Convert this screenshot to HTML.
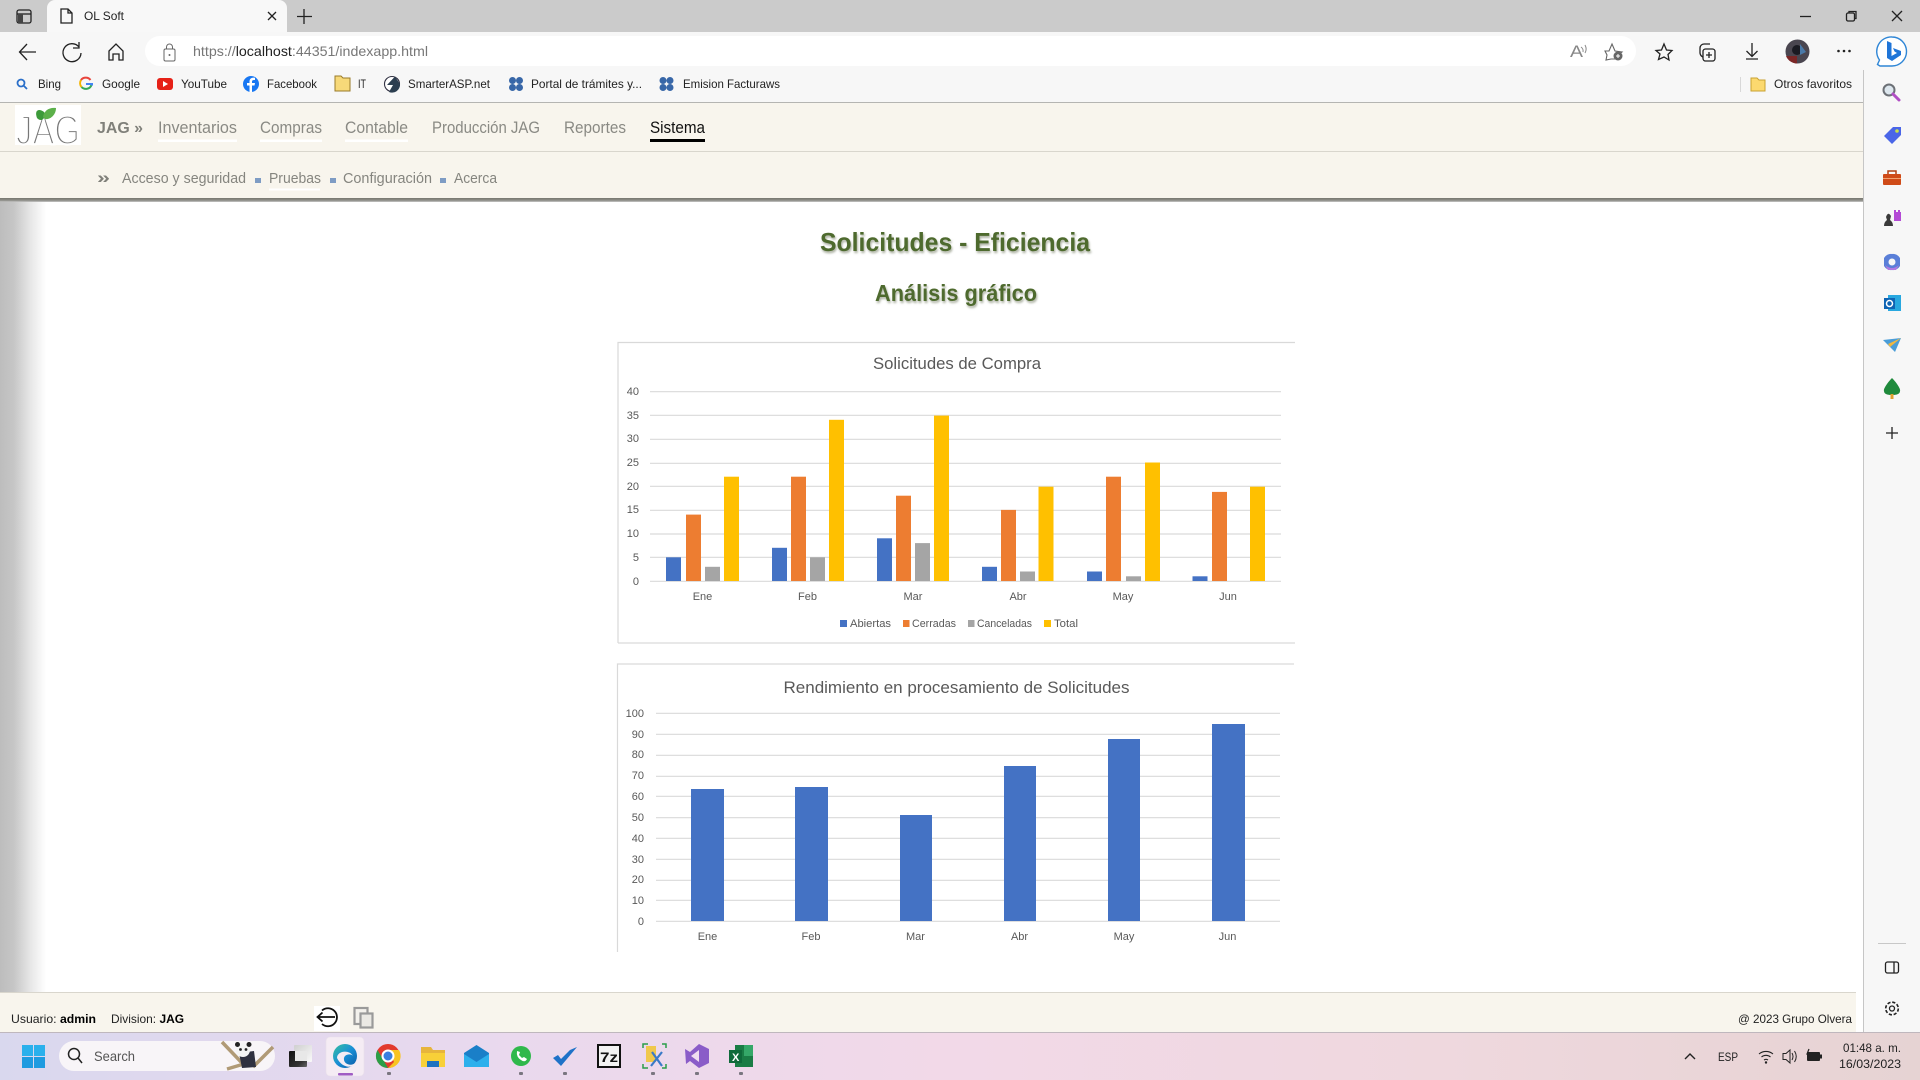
<!DOCTYPE html>
<html lang="es"><head><meta charset="utf-8"><title>OL Soft</title>
<style>
html,body{margin:0;padding:0;background:#fff;overflow:hidden}
svg{display:block}
text{font-family:"Liberation Sans",sans-serif}
.tb{font-size:12px;fill:#222}
.nav{font-size:17px;fill:#8a8a84}
.sub{font-size:15px;fill:#85857f}
.cl{font-size:11px;fill:#595959}
.ct{font-size:17px;fill:#595959}
.ic{fill:none;stroke:#222;stroke-width:1.3}
.h{font-weight:bold;fill:#4e6a2e;filter:drop-shadow(1px 2px 1px rgba(90,100,70,.5))}
</style></head><body>
<svg width="1920" height="1080" viewBox="0 0 1920 1080" xmlns="http://www.w3.org/2000/svg">
<defs>
<linearGradient id="ls" x1="0" x2="1" y1="0" y2="0"><stop offset="0" stop-color="#bdbdbd"/><stop offset=".3" stop-color="#c6c6c6"/><stop offset=".65" stop-color="#e6e6e6"/><stop offset="1" stop-color="#fff"/></linearGradient>
<linearGradient id="ns" x1="0" x2="0" y1="0" y2="1"><stop offset="0" stop-color="#77776f"/><stop offset=".6" stop-color="#8f8f89"/><stop offset="1" stop-color="#c8c8c8"/></linearGradient>
<linearGradient id="tk" x1="0" x2="1" y1="0" y2="0"><stop offset="0" stop-color="#d9d8ee"/><stop offset=".25" stop-color="#e9d9ee"/><stop offset=".5" stop-color="#f2d9e8"/><stop offset=".75" stop-color="#efd8de"/><stop offset="1" stop-color="#e6d3d3"/></linearGradient>
<linearGradient id="ed" x1="0" x2="1" y1="0" y2="1"><stop offset="0" stop-color="#35c1a0"/><stop offset=".5" stop-color="#1a8fd6"/><stop offset="1" stop-color="#0c59a4"/></linearGradient>
<linearGradient id="tv1" x1="0" x2="1" y1="0" y2="1"><stop offset="0" stop-color="#111"/><stop offset=".7" stop-color="#333"/><stop offset="1" stop-color="#666"/></linearGradient>
<linearGradient id="tv2" x1="0" x2="1" y1="0" y2="1"><stop offset="0" stop-color="#cfcfcf"/><stop offset="1" stop-color="#fafafa"/></linearGradient>
</defs>

<!-- base -->
<rect width="1920" height="1080" fill="#fff"/>
<!-- window title -->
<rect width="1920" height="32" fill="#cbcbcb"/>
<path d="M47 32V8a8 8 0 0 1 8-8H279a8 8 0 0 1 8 8V32Z" fill="#f8f8f8"/>
<rect x="17" y="10" width="14" height="13" rx="2" class="ic" stroke-width="1.6"/><path d="M17 14H31" class="ic"/><rect x="18" y="14" width="5" height="9" fill="#444"/>
<path d="M61 9H68L72 13V23H61Z M68 9V13H72" class="ic" stroke-width="1.2"/>
<text x="84" y="20" class="tb" textLength="40" lengthAdjust="spacingAndGlyphs">OL Soft</text>
<path d="M268 12L276 20M276 12L268 20" class="ic" stroke-width="1.4"/>
<path d="M304 9V24M297 16.500H312" class="ic"/>
<path d="M1800 16.500H1811" class="ic"/>
<rect x="1846.500" y="13" width="8" height="8" rx="1.500" class="ic" stroke-width="1.100"/><path d="M1849 13V11.500H1856V18.500H1854.500" class="ic" stroke-width="1.100"/>
<path d="M1892 11L1902 21M1902 11L1892 21" class="ic" stroke-width="1.200"/>

<!-- toolbar & bookmarks -->
<rect y="32" width="1920" height="70" fill="#f7f7f7"/>
<path d="M36 52H20M27 44L19.500 52L27 60" class="ic" stroke-width="1.200"/>
<path d="M79 47A9 9 0 1 0 81 53M79 42V48H73" class="ic" stroke-width="1.100"/>
<path d="M109 51L116 44L123 51V60H119V54H113V60H109Z" class="ic" stroke-width="1.100"/>
<rect x="145" y="36" width="1491" height="30" rx="15" fill="#fff"/>
<rect x="164" y="49" width="11" height="12" rx="1.500" fill="none" stroke="#666" stroke-width="1"/><path d="M166.500 49V47A3 3 0 0 1 172.500 47V49" fill="none" stroke="#666" stroke-width="1"/><circle cx="169.500" cy="55" r="1" fill="#666"/>
<text x="193" y="56" font-size="14" fill="#777" textLength="235" lengthAdjust="spacingAndGlyphs">https://<tspan fill="#222">localhost</tspan>:44351/indexapp.html</text>

<text x="1570" y="57" font-size="17" fill="#888" textLength="13" lengthAdjust="spacingAndGlyphs">A</text>
<path d="M1585 45A8 8 0 0 1 1585 53M1581 47A5 5 0 0 1 1583 52" fill="none" stroke="#888"/>
<path d="M1612 44L1615 51L1622 52L1617 56L1618 59H1611L1606 60L1607 55L1605 51L1609 51Z" fill="none" stroke="#666" stroke-width="1.100"/><circle cx="1618" cy="56" r="4.500" fill="#666"/><path d="M1616 56H1620M1618 54V58" stroke="#fff"/>
<path d="M1664 44L1666.500 50L1672 50.500L1668 54.500L1669 60L1664 57L1658.500 59.500L1660 54L1656 50.500L1661.500 50Z" class="ic" stroke-width="1.100"/>
<rect x="1703" y="49" width="12" height="12" rx="2.500" class="ic" stroke-width="1.100"/><path d="M1703 57A5 5 0 0 1 1700 53V48A4 4 0 0 1 1704 44H1710M1709 52V58M1706 55H1712" class="ic" stroke-width="1.100"/>
<path d="M1752 43V56M1746.500 51L1752 56.500L1757.500 51M1746 59H1758" class="ic" stroke-width="1.100"/>
<circle cx="1797.500" cy="51.500" r="12" fill="#4a4650"/><circle cx="1797" cy="50" r="5" fill="#1a1a22"/><path d="M1786 56A12 12 0 0 0 1797 63.500V56Z" fill="#7b2626"/><path d="M1800 44L1806 52L1800 55Z" fill="#4a79a8"/>
<circle cx="1838.500" cy="51" r="1.300" fill="#222"/><circle cx="1844" cy="51" r="1.300" fill="#222"/><circle cx="1849.500" cy="51" r="1.300" fill="#222"/>
<!-- bing button -->
<path d="M1892 37A14.500 14.500 0 0 1 1892 66H1880L1877.500 64.500L1879.500 60A14.500 14.500 0 0 1 1892 37Z" fill="#fff" stroke="#2f86d6" stroke-width="1.400"/>
<path d="M1887 41L1891.500 43V56L1897 53L1894.500 51.500L1893 48L1901 51V55L1892 61L1887 58Z" fill="#1f75d8"/>

<!-- bookmarks -->
<circle cx="21" cy="83" r="3.500" fill="none" stroke="#2a6fc9" stroke-width="1.800"/><path d="M23.500 85.500L27 89" stroke="#2a6fc9" stroke-width="1.800"/>
<text x="38" y="88" class="tb" textLength="23" lengthAdjust="spacingAndGlyphs">Bing</text>
<path d="M90.500 80A6 6 0 0 0 81 80" fill="none" stroke="#e8453c" stroke-width="2"/><path d="M81 80A6 6 0 0 0 81.500 87" fill="none" stroke="#f4b400" stroke-width="2"/><path d="M81.500 87A6 6 0 0 0 91.500 85" fill="none" stroke="#34a853" stroke-width="2"/><path d="M86 84H92V85.500" fill="none" stroke="#4285f4" stroke-width="2"/>
<text x="102" y="88" class="tb" textLength="38" lengthAdjust="spacingAndGlyphs">Google</text>
<rect x="157" y="78" width="16" height="12" rx="3" fill="#e62117"/><path d="M163 81V87L168 84Z" fill="#fff"/>
<text x="181" y="88" class="tb" textLength="46" lengthAdjust="spacingAndGlyphs">YouTube</text>
<circle cx="251" cy="84" r="8" fill="#1877f2"/><path d="M252 92V85.500H254.500L255 83H252V81.500Q252 80 254 80H255V77.800Q250 77 249.500 81V83H247V85.500H249.500V92Z" fill="#fff"/>
<text x="267" y="88" class="tb" textLength="50" lengthAdjust="spacingAndGlyphs">Facebook</text>
<path d="M335 76H341L343 78H350V91H335Z" fill="#f7d979" stroke="#9a7b2a" stroke-width="1"/>
<text x="358" y="88" class="tb" textLength="8" lengthAdjust="spacingAndGlyphs">IT</text>
<circle cx="392" cy="84" r="7.500" fill="#fff" stroke="#334" stroke-width="1.100"/><path d="M395 76.500L387 85H393L389 92A8 8 0 0 0 400 84Z" fill="#2c3e50"/>
<text x="408" y="88" class="tb" textLength="82" lengthAdjust="spacingAndGlyphs">SmarterASP.net</text>
<g fill="#3867a8"><circle cx="512.500" cy="80.500" r="3.500"/><circle cx="519.500" cy="80.500" r="3.500"/><circle cx="512.500" cy="87.500" r="3.500"/><circle cx="519.500" cy="87.500" r="3.500"/>
<circle cx="663" cy="80.500" r="3.500"/><circle cx="670" cy="80.500" r="3.500"/><circle cx="663" cy="87.500" r="3.500"/><circle cx="670" cy="87.500" r="3.500"/></g>
<text x="531" y="88" class="tb" textLength="111" lengthAdjust="spacingAndGlyphs">Portal de trámites y...</text>
<text x="683" y="88" class="tb" textLength="97" lengthAdjust="spacingAndGlyphs">Emision Facturaws</text>
<rect x="1740" y="77" width="1" height="15" fill="#d8d8d8"/>
<path d="M1751 78H1757L1759 80H1765V91H1751Z" fill="#fcd96f" stroke="#c8a232" stroke-width="1"/>
<text x="1774" y="88" class="tb" textLength="78" lengthAdjust="spacingAndGlyphs">Otros favoritos</text>

<!-- app nav -->
<rect y="102" width="1863" height="1" fill="#b5b5b2"/>
<rect y="103" width="1863" height="48" fill="#f8f5ed"/>
<rect y="151" width="1863" height="1" fill="#d9d6cd"/>
<rect y="152" width="1863" height="46" fill="#f8f5ed"/>
<rect y="198" width="1863" height="4" fill="url(#ns)"/>
<rect x="15" y="105" width="66" height="40" fill="#fff"/>
<text x="16" y="144" font-size="41" fill="#777" stroke="#fff" stroke-width="2.200" textLength="64" lengthAdjust="spacingAndGlyphs">JAG</text>
<path d="M37 118C34 110 39 108 44 112C46 115 44 120 41 120C39 120 38 119 37 118Z" fill="#3d9a3a"/><path d="M43 117C44 110 50 107 56 108C56 115 50 120 45 119Z" fill="#5cb04a"/>
<text x="97" y="133" font-size="16" font-weight="bold" fill="#80807a" textLength="46" lengthAdjust="spacingAndGlyphs">JAG »</text>
<text x="158" y="133" class="nav" textLength="79" lengthAdjust="spacingAndGlyphs">Inventarios</text>
<text x="260" y="133" class="nav" textLength="62" lengthAdjust="spacingAndGlyphs">Compras</text>
<text x="345" y="133" class="nav" textLength="63" lengthAdjust="spacingAndGlyphs">Contable</text>
<text x="432" y="133" class="nav" textLength="108" lengthAdjust="spacingAndGlyphs">Producción JAG</text>
<text x="564" y="133" class="nav" textLength="62" lengthAdjust="spacingAndGlyphs">Reportes</text>
<text x="650" y="133" class="nav" style="fill:#111" textLength="55" lengthAdjust="spacingAndGlyphs">Sistema</text>
<g fill="#fff"><rect x="158" y="139.500" width="79" height="2.500"/><rect x="260" y="139.500" width="62" height="2.500"/><rect x="345" y="139.500" width="63" height="2.500"/></g>
<rect x="650" y="139" width="55" height="3" fill="#000"/>
<text x="97" y="183" font-size="17" font-weight="bold" fill="#80807a" textLength="13" lengthAdjust="spacingAndGlyphs">»</text>
<text x="122" y="183" class="sub" textLength="124" lengthAdjust="spacingAndGlyphs">Acceso y seguridad</text>
<text x="269" y="183" class="sub" textLength="52" lengthAdjust="spacingAndGlyphs">Pruebas</text>
<text x="343" y="183" class="sub" textLength="89" lengthAdjust="spacingAndGlyphs">Configuración</text>
<text x="454" y="183" class="sub" textLength="43" lengthAdjust="spacingAndGlyphs">Acerca</text>
<g fill="#7e9cc4"><rect x="255" y="178" width="6" height="5"/><rect x="330" y="178" width="6" height="5"/><rect x="440" y="178" width="6" height="5"/></g>
<rect x="269" y="188.500" width="51" height="2" fill="#fff"/>

<!-- left shadow -->
<rect x="0" y="202" width="46" height="790" fill="url(#ls)"/>

<!-- headings -->
<text x="820" y="251" font-size="26" class="h" textLength="270" lengthAdjust="spacingAndGlyphs">Solicitudes - Eficiencia</text>
<text x="875" y="301" font-size="23" class="h" textLength="162" lengthAdjust="spacingAndGlyphs">Análisis gráfico</text>

<!-- chart 1 -->
<path d="M618 643V342.500H1295M618 643H1295" fill="none" stroke="#d9d9d9" stroke-width="1.200"/>
<text x="873" y="369" class="ct" textLength="168" lengthAdjust="spacingAndGlyphs">Solicitudes de Compra</text>
<g stroke="#d9d9d9" stroke-width="1.200"><path d="M650 391.700H1281M650 415.300H1281M650 439.300H1281M650 463.300H1281M650 486.300H1281M650 510.300H1281M650 534H1281M650 557.300H1281M650 581.300H1281"/></g>
<g class="cl" text-anchor="end">
<text x="639" y="395">40</text><text x="639" y="419">35</text><text x="639" y="442">30</text><text x="639" y="466">25</text><text x="639" y="490">20</text><text x="639" y="513">15</text><text x="639" y="537">10</text><text x="639" y="561">5</text><text x="639" y="585">0</text></g>
<g fill="#4472c4"><rect x="666" y="557.300" width="15" height="23.700"/><rect x="772" y="547.800" width="15" height="33.200"/><rect x="877" y="538.300" width="15" height="42.700"/><rect x="982" y="566.800" width="15" height="14.200"/><rect x="1087" y="571.500" width="15" height="9.500"/><rect x="1192.500" y="576.300" width="15" height="4.700"/></g>
<g fill="#ed7d31"><rect x="686" y="514.600" width="15" height="66.400"/><rect x="791" y="476.700" width="15" height="104.300"/><rect x="896" y="495.700" width="15" height="85.300"/><rect x="1001" y="509.900" width="15" height="71.100"/><rect x="1106" y="476.700" width="15" height="104.300"/><rect x="1212" y="491.900" width="15" height="89.100"/></g>
<g fill="#a5a5a5"><rect x="705" y="566.800" width="15" height="14.200"/><rect x="810" y="557.300" width="15" height="23.700"/><rect x="915" y="543.100" width="15" height="37.900"/><rect x="1020" y="571.500" width="15" height="9.500"/><rect x="1126" y="576.300" width="15" height="4.700"/></g>
<g fill="#ffc000"><rect x="724" y="476.700" width="15" height="104.300"/><rect x="829" y="419.800" width="15" height="161.200"/><rect x="934" y="415.600" width="15" height="165.400"/><rect x="1038.500" y="486.700" width="15" height="94.300"/><rect x="1145" y="462.500" width="15" height="118.500"/><rect x="1250" y="486.700" width="15" height="94.300"/></g>
<g class="cl" text-anchor="middle"><text x="702.500" y="600">Ene</text><text x="807.500" y="600">Feb</text><text x="913" y="600">Mar</text><text x="1018" y="600">Abr</text><text x="1123" y="600">May</text><text x="1228" y="600">Jun</text></g>
<rect x="840" y="620" width="7" height="7" fill="#4472c4"/><text x="850" y="627" class="cl" textLength="41" lengthAdjust="spacingAndGlyphs">Abiertas</text>
<rect x="903" y="620" width="6.500" height="7" fill="#ed7d31"/><text x="912" y="627" class="cl" textLength="44" lengthAdjust="spacingAndGlyphs">Cerradas</text>
<rect x="968" y="620" width="6.500" height="7" fill="#a5a5a5"/><text x="977" y="627" class="cl" textLength="55" lengthAdjust="spacingAndGlyphs">Canceladas</text>
<rect x="1044" y="620" width="7" height="7" fill="#ffc000"/><text x="1054" y="627" class="cl" textLength="24" lengthAdjust="spacingAndGlyphs">Total</text>

<!-- chart 2 -->
<path d="M617.500 952V664H1294" fill="none" stroke="#d9d9d9" stroke-width="1.200"/>
<text x="783.500" y="693" class="ct" textLength="346" lengthAdjust="spacingAndGlyphs">Rendimiento en procesamiento de Solicitudes</text>
<g stroke="#d9d9d9" stroke-width="1.200"><path d="M656 713.300H1280M656 734.300H1280M656 755.300H1280M656 776.300H1280M656 796.300H1280M656 817.700H1280M656 838.300H1280M656 859.300H1280M656 880.300H1280M656 900.300H1280M656 921.300H1280"/></g>
<g class="cl" text-anchor="end"><text x="644" y="717">100</text><text x="644" y="738">90</text><text x="644" y="758">80</text><text x="644" y="779">70</text><text x="644" y="800">60</text><text x="644" y="821">50</text><text x="644" y="842">40</text><text x="644" y="863">30</text><text x="644" y="883">20</text><text x="644" y="904">10</text><text x="644" y="925">0</text></g>
<g fill="#4472c4"><rect x="691" y="789" width="33" height="132"/><rect x="795" y="787" width="33" height="134"/><rect x="900" y="815" width="32" height="106"/><rect x="1004" y="766" width="32" height="155"/><rect x="1108" y="739" width="32" height="182"/><rect x="1212" y="724" width="33" height="197"/></g>
<g class="cl" text-anchor="middle"><text x="707.500" y="940">Ene</text><text x="811" y="940">Feb</text><text x="915.500" y="940">Mar</text><text x="1019.500" y="940">Abr</text><text x="1124" y="940">May</text><text x="1227.500" y="940">Jun</text></g>

<!-- footer -->
<rect y="992" width="1856" height="1" fill="#d9d6cd"/>
<rect y="993" width="1856" height="39" fill="#f8f5ed"/>
<text x="11" y="1023" font-size="12" fill="#222" textLength="85" lengthAdjust="spacingAndGlyphs">Usuario: <tspan font-weight="bold" fill="#000">admin</tspan></text>
<text x="111" y="1023" font-size="12" fill="#222" textLength="73" lengthAdjust="spacingAndGlyphs">Division: <tspan font-weight="bold" fill="#000">JAG</tspan></text>
<rect x="314" y="1006" width="26" height="25" fill="#fff"/>
<path d="M322 1010.500A9 9 0 1 1 322 1024M335 1017H318M322.500 1012.500L317.500 1017L322.500 1021.500" fill="none" stroke="#111" stroke-width="1.800"/>
<rect x="354.500" y="1008" width="13" height="16" fill="#f3f1ec" stroke="#9a9a9a" stroke-width="2.200"/><rect x="360.500" y="1013.500" width="12" height="14" fill="#ebe9e4" stroke="#9a9a9a" stroke-width="2.200"/>
<text x="1738" y="1023" font-size="12" fill="#222" textLength="114" lengthAdjust="spacingAndGlyphs">@ 2023 Grupo Olvera</text>

<!-- sidebar -->
<rect x="1863" y="70" width="57" height="962" fill="#f7f7f7"/>
<rect x="1863" y="70" width="1" height="962" fill="#c6c6c6"/>
<circle cx="1889" cy="90" r="5.500" fill="#dde7ee" stroke="#6c7076" stroke-width="2"/><path d="M1893 94L1899 100" stroke="#b04ec4" stroke-width="3" stroke-linecap="round"/>
<path d="M1884 136L1893 127H1901V135L1892 144Z" fill="#4a66e8"/><circle cx="1897" cy="131" r="1.800" fill="#c8e04a"/>
<rect x="1883" y="174" width="18" height="11" rx="1" fill="#cf4b18"/><path d="M1888 174V171H1896V174" fill="none" stroke="#b24014" stroke-width="1.500"/><rect x="1883" y="178" width="18" height="1" fill="#f2a06e"/>
<path d="M1884 226Q1884 222 1887 220L1886 217Q1888 211 1891 216L1890 220Q1893 222 1893 226Z" fill="#3a3a3a"/><path d="M1894 221V210H1896V212H1898V210H1900V212H1901V221Z" fill="#b44ad6"/>
<path d="M1892 254A8 8 0 0 1 1900 258V266A8 8 0 0 1 1892 270A8 8 0 0 1 1884 266V258A8 8 0 0 1 1892 254Z" fill="#5a7fd8"/><circle cx="1892" cy="262" r="3.500" fill="#f7f7f7"/><path d="M1885 265Q1892 271 1899 265L1896 270H1888Z" fill="#b07ae0"/>
<rect x="1888" y="295" width="13" height="16" fill="#28a8e0"/><rect x="1884" y="298" width="11" height="11" fill="#0f64b4"/><circle cx="1889.500" cy="303.500" r="3" fill="none" stroke="#fff" stroke-width="1.500"/>
<path d="M1883 340L1901 338L1895 352L1890 347Z" fill="#4a9dd8"/><path d="M1888 344L1901 338L1890 347Z" fill="#f0b840"/>
<path d="M1892 378C1896 382 1901 389 1900 391Q1900 395 1892 395Q1884 395 1884 391C1883 389 1888 382 1892 378Z" fill="#1f8a3c"/><rect x="1890.500" y="394" width="3" height="5" fill="#e0a030"/>
<path d="M1892 427V439M1886 433H1898" class="ic" stroke-width="1.100"/>
<rect x="1878" y="943" width="28" height="1" fill="#c8c8c8"/>
<rect x="1885.500" y="962" width="13" height="11" rx="2" class="ic" stroke-width="1.200"/><path d="M1894 962V973" class="ic" stroke-width="1.200"/>
<circle cx="1892" cy="1008.500" r="2.500" class="ic" stroke-width="1.200"/><circle cx="1892" cy="1008.500" r="6.300" fill="none" stroke="#222" stroke-width="1.600" stroke-dasharray="3.200 1.750"/>

<!-- taskbar -->
<rect y="1032" width="1920" height="48" fill="url(#tk)"/>
<rect y="1032" width="1920" height="1" fill="#bfb7bd"/>
<g fill="#1e9be0"><rect x="22" y="1045" width="11" height="11" fill="#2ab0ec"/><rect x="34" y="1045" width="11" height="11" fill="#2ab0ec"/><rect x="22" y="1057" width="11" height="11"/><rect x="34" y="1057" width="11" height="11"/></g>
<rect x="59" y="1041" width="216" height="30" rx="15" fill="#f8f5f8"/>
<circle cx="74" cy="1054" r="5.500" fill="none" stroke="#222" stroke-width="1.500"/><path d="M78 1058L82 1063" stroke="#222" stroke-width="1.500"/>
<text x="94" y="1061" font-size="14" fill="#555" textLength="41" lengthAdjust="spacingAndGlyphs">Search</text>
<path d="M222 1042L243 1064M273 1047L253 1067M227 1069L254 1061" stroke="#b09a76" stroke-width="3.500" fill="none"/>
<path d="M239 1053L254 1051L256 1067L242 1068Z" fill="#2f3140"/>
<circle cx="243" cy="1050" r="7" fill="#f4f4f4"/><circle cx="237.500" cy="1044.500" r="2.500" fill="#222"/><circle cx="249" cy="1044.500" r="2.500" fill="#222"/><circle cx="240.500" cy="1049.500" r="1.400" fill="#222"/><circle cx="246" cy="1049.500" r="1.400" fill="#222"/>
<rect x="294" y="1045" width="18" height="17" rx="1" fill="url(#tv2)"/><rect x="289" y="1051" width="18" height="16" rx="1" fill="url(#tv1)"/><rect x="295" y="1051" width="12" height="10" fill="#e8e8e8"/>
<rect x="326" y="1037" width="38" height="39" rx="4" fill="#f5ecf4" stroke="#e8dfe9" stroke-width=".6"/>
<circle cx="345" cy="1056" r="12" fill="url(#ed)"/><path d="M337 1058C337 1051 349 1049 353 1056C351 1053 343 1054 344 1060C345 1065 352 1066 355 1063C352 1069 342 1068 337 1058Z" fill="#f5ecf4"/>
<rect x="338" y="1073" width="15" height="2.500" rx="1" fill="#a05cc4"/>
<circle cx="388" cy="1056" r="12" fill="#e23a2d"/><path d="M388 1068A12 12 0 0 1 377.500 1050L384 1061Z" fill="#2b9e47"/><path d="M388 1068A12 12 0 0 0 399 1050H388L394 1062Z" fill="#f8c422"/><circle cx="388" cy="1056" r="5.500" fill="#3a7fe0" stroke="#fff" stroke-width="2"/>
<path d="M421 1047H431L433 1050H445V1056H421Z" fill="#e7b53c"/><rect x="421" y="1053" width="24" height="14" fill="#f8d038"/><rect x="427" y="1061" width="12" height="6" fill="#1e72c0"/>
<path d="M464 1053L476.500 1045L489 1053V1067H464Z" fill="#1a7fc8"/><path d="M464 1054L476.500 1062L489 1054V1067H464Z" fill="#2cb0ec"/>
<circle cx="521" cy="1056" r="10" fill="#2fb84b"/><path d="M517 1051Q516 1057 521 1060Q525 1063 527 1059L524 1057L522 1058L519 1055L520 1052Z" fill="#fff"/>
<path d="M553 1058L561 1066L577 1047L570 1050L561 1059L558 1055Z" fill="#1e72c8"/>
<rect x="597" y="1044" width="24" height="24" fill="#111"/><rect x="599" y="1046" width="20" height="20" fill="#f2f2f2"/><text x="600" y="1062" font-size="14" font-weight="bold" fill="#111" textLength="18" lengthAdjust="spacingAndGlyphs">7z</text>
<path d="M646 1046H656V1062H646Z" fill="#f0c84c"/><path d="M643 1048V1044H648M662 1044H666V1048M643 1064V1068H648M666 1064V1068H662" fill="none" stroke="#2a9e4a" stroke-width="1.500"/><path d="M651 1066L662 1052M662 1066L652 1052" stroke="#3a7ac8" stroke-width="2.200"/>
<path d="M699 1044L709 1049V1063L699 1068L690 1061L686 1064L685 1049L690 1052Z" fill="#8a5cc8"/><path d="M691 1056L699 1050V1062Z" fill="#f0dcf0"/>
<path d="M735 1045H753V1067H735Z" fill="#1a7d45"/><path d="M744 1045H753V1056H744Z" fill="#35a868"/><rect x="729" y="1050" width="13" height="13" fill="#0f6a3a"/><text x="732" y="1061" font-size="11" font-weight="bold" fill="#fff">X</text>
<g fill="#7a7680"><rect x="387" y="1072" width="4" height="3" rx="1"/><rect x="519" y="1072" width="4" height="3" rx="1"/><rect x="563" y="1072" width="4" height="3" rx="1"/><rect x="651" y="1072" width="4" height="3" rx="1"/><rect x="695" y="1072" width="4" height="3" rx="1"/><rect x="739" y="1072" width="4" height="3" rx="1"/></g>

<!-- tray -->
<path d="M1685 1059L1690 1054L1695 1059" fill="none" stroke="#222" stroke-width="1.400"/>
<text x="1718" y="1061" font-size="12" fill="#222" textLength="20" lengthAdjust="spacingAndGlyphs">ESP</text>
<path d="M1759 1054A11 11 0 0 1 1773 1054M1761.500 1057A7 7 0 0 1 1770.500 1057M1764 1060A3.500 3.500 0 0 1 1768 1060" fill="none" stroke="#222" stroke-width="1.100"/><circle cx="1766" cy="1062.500" r="1.200" fill="#222"/>
<path d="M1783 1053.500H1786L1790 1050V1063L1786 1059.500H1783Z" fill="none" stroke="#222" stroke-width="1"/><path d="M1792 1053Q1794 1056.500 1792 1060M1794.500 1051Q1798 1056.500 1794.500 1062" fill="none" stroke="#222" stroke-width="1"/>
<rect x="1807" y="1052" width="13" height="9" rx="1" fill="#222"/><rect x="1820" y="1054.500" width="2" height="4" fill="#222"/><path d="M1809 1049L1807 1054H1811L1809 1059" fill="none" stroke="#222" stroke-width="1.200"/>
<text x="1901" y="1052" font-size="12" fill="#222" text-anchor="end" textLength="58" lengthAdjust="spacingAndGlyphs">01:48 a. m.</text>
<text x="1901" y="1068" font-size="12" fill="#222" text-anchor="end" textLength="62" lengthAdjust="spacingAndGlyphs">16/03/2023</text>
</svg>
</body></html>
